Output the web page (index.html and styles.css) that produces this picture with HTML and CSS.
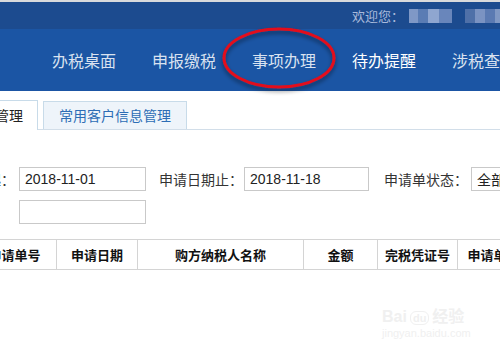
FILE: index.html
```html
<!DOCTYPE html>
<html lang="zh-CN">

<head>
    <meta charset="UTF-8">
    <meta name="viewport" content="width=device-width, initial-scale=1.0">
    <title>事项办理</title>
    <link rel="stylesheet" href="styles.css">
</head>

<body>
    <div class="topbar">
        <span class="welcome">欢迎您：</span>
        <span class="blur blur-name"></span>
        <span class="blur blur-exit"></span>
    </div>

    <nav class="mainnav">
        <a class="nav-item">办税桌面</a>
        <a class="nav-item">申报缴税</a>
        <a class="nav-item">事项办理</a>
        <a class="nav-item nav-hover">待办提醒</a>
        <a class="nav-item">涉税查询</a>
    </nav>

    <!-- red circle drawn over the menu -->
    <svg class="circle-mark" width="130" height="80" viewBox="0 0 130 80">
        <defs>
            <filter id="mark-shadow" x="-20%" y="-20%" width="140%" height="150%">
                <feDropShadow dx="0" dy="3" stdDeviation="2" flood-color="#000" flood-opacity="0.45" />
            </filter>
        </defs>
        <ellipse cx="65" cy="39" rx="55" ry="29" fill="none" stroke="#e3101a" stroke-width="3"
            filter="url(#mark-shadow)" />
    </svg>

    <div class="content">
        <div class="tabs">
            <div class="tab tab-active">管理</div>
            <div class="tab">常用客户信息管理</div>
        </div>

        <form class="query">
            <div class="query-row">
                <label class="query-label">申请日期起：</label>
                <input class="query-input" type="text" value="2018-11-01">
                <label class="query-label gap-left">申请日期止：</label>
                <input class="query-input query-input-narrow" type="text" value="2018-11-18">
                <label class="query-label gap-left gap-wide">申请单状态：</label>
                <select class="query-select">
                    <option>全部</option>
                </select>
            </div>
            <div class="query-row">
                <span class="query-label"></span>
                <input class="query-input" type="text" value="">
            </div>
        </form>

        <table class="grid">
            <thead>
                <tr>
                    <th class="col-no">申请单号</th>
                    <th class="col-date">申请日期</th>
                    <th class="col-name">购方纳税人名称</th>
                    <th class="col-amount">金额</th>
                    <th class="col-cert">完税凭证号</th>
                    <th class="col-state">申请单状态</th>
                </tr>
            </thead>
        </table>
    </div>

    <div class="watermark">
        <div class="wm-logo">Bai<span class="wm-paw">du</span>经验</div>
        <div class="wm-url">jingyan.baidu.com</div>
    </div>
</body>

</html>
```

FILE: styles.css
```css
body {
    margin: 0;
    width: 500px;
    height: 350px;
    overflow: hidden;
    position: relative;
    background: #fff;
    font-family: "Liberation Sans", "Noto Sans CJK SC", sans-serif;
    color: #333;
}

.topbar {
    height: 27px;
    border-top: 2px solid #d9dadc;
    background: #1c4b8f;
    display: flex;
    align-items: center;
    padding-left: 352px;
    overflow: hidden;
    white-space: nowrap;
}

.welcome {
    flex-shrink: 0;
    font-size: 13px;
    color: #a9badb;
    font-family: "Noto Sans CJK SC", sans-serif;
}

.blur {
    height: 14px;
    flex-shrink: 0;
}

.blur-name {
    width: 43px;
    margin-left: 5px;
    background: linear-gradient(90deg, #7f98c6 0 20%, #5a7cb4 20% 45%, #8fa6d0 45% 70%, #6986bb 70% 100%);
}

.blur-exit {
    width: 40px;
    margin-left: 13px;
    background: linear-gradient(90deg, #4f70a8 0 25%, #7b93c2 25% 50%, #5b7ab2 50% 75%, #8098c4 75% 100%);
}

.mainnav {
    height: 62px;
    background: #1b55a4;
    display: flex;
    padding-left: 34px;
    overflow: hidden;
    white-space: nowrap;
}

.nav-item {
    flex-shrink: 0;
    padding: 0 18px;
    line-height: 62px;
    font-size: 16px;
    font-family: "Noto Sans CJK SC", sans-serif;
    color: #d9e2f0;
}

.nav-hover {
    color: #fff;
}

.circle-mark {
    position: absolute;
    left: 214px;
    top: 19px;
}

.content {
    margin-left: -80px;
    padding-top: 9px;
}

.tabs {
    display: flex;
    align-items: flex-end;
    gap: 5px;
    height: 29px;
    padding-left: 60px;
    border-bottom: 1px solid #d2dee9;
}

.tab {
    height: 27px;
    line-height: 27px;
    padding: 0 15px;
    border: 1px solid #c8dbe9;
    border-bottom: none;
    background: #eef4fa;
    color: #2d6db5;
    font-size: 14px;
    font-family: "Noto Sans CJK SC", sans-serif;
}

.tab-active {
    height: 29px;
    line-height: 29px;
    margin-bottom: -1px;
    padding: 0 14px 0 14px;
    background: #fff;
    color: #222;
}

.query {
    margin: 37px 0 0;
    padding-left: 11px;
    display: flex;
    flex-direction: column;
    gap: 9px;
}

.query-row {
    display: flex;
    align-items: center;
    white-space: nowrap;
}

.query-label {
    width: 84px;
    flex-shrink: 0;
    margin-right: 4px;
    font-size: 14px;
    line-height: 24px;
    color: #333;
    font-family: "Noto Sans CJK SC", sans-serif;
}

.gap-left {
    margin-left: 13px;
    margin-right: 1px;
}

.gap-wide {
    margin-left: 15px;
}

.query-input {
    box-sizing: border-box;
    width: 127px;
    height: 24px;
    flex-shrink: 0;
    margin: 0;
    padding: 0 5px;
    border: 1px solid #c9c9c9;
    font-family: "Liberation Sans", sans-serif;
    font-size: 14px;
    color: #222;
    outline: none;
}

.query-input-narrow {
    width: 125px;
}

.query-select {
    box-sizing: border-box;
    appearance: none;
    width: 90px;
    height: 24px;
    flex-shrink: 0;
    margin: 0 0 0 2px;
    padding: 0 5px;
    border: 1px solid #c9c9c9;
    border-radius: 0;
    background: #fff;
    font-family: "Noto Sans CJK SC", sans-serif;
    font-size: 14px;
    color: #222;
}

.grid {
    width: 564px;
    margin: 15px 0 0 52px;
    border-collapse: collapse;
    table-layout: fixed;
}

.grid th {
    height: 29px;
    padding: 0;
    border: 1px solid #d4d4d4;
    border-left: none;
    font-family: "Noto Sans CJK SC", sans-serif;
    font-size: 13px;
    font-weight: bold;
    color: #111;
    text-align: center;
    white-space: nowrap;
    overflow: hidden;
}

.grid th:first-child {
    border-left: 1px solid #d4d4d4;
}

.col-no { width: 83px; }
.col-date { width: 80px; }
.col-name { width: 165px; }
.col-amount { width: 73px; }
.col-cert { width: 79px; }
.col-state { width: 84px; }

.watermark {
    position: absolute;
    left: 382px;
    top: 308px;
    color: #f0f0f0;
    font-family: "Liberation Sans", "Noto Sans CJK SC", sans-serif;
}

.wm-logo {
    font-size: 16px;
    font-weight: bold;
    line-height: 18px;
}

.wm-paw {
    display: inline-block;
    margin: 0 3px;
    padding: 0 2px;
    border: 1px solid #f0f0f0;
    border-radius: 6px;
    font-size: 11px;
    line-height: 12px;
}

.wm-url {
    font-size: 11px;
    line-height: 14px;
}
```
